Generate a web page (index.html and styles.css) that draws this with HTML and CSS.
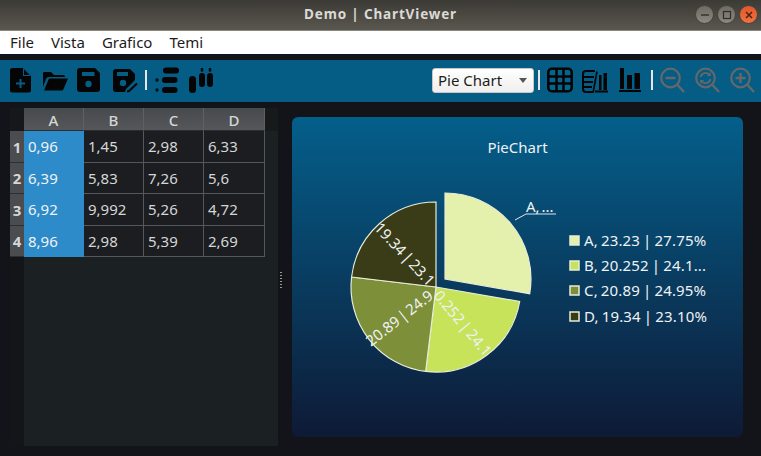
FILE: index.html
```html
<!DOCTYPE html>
<html lang="en">
<head>
<meta charset="UTF-8">
<title>Demo | ChartViewer</title>
<link rel="stylesheet" href="styles.css">
</head>
<body>

<header class="titlebar">
    <span class="title">Demo | ChartViewer</span>
    <div class="win-buttons">
        <span class="win-btn"><svg width="10" height="10" viewBox="0 0 10 10"><path d="M1 5h8" stroke="#2f2e2a" stroke-width="1.4"/></svg></span>
        <span class="win-btn"><svg width="10" height="10" viewBox="0 0 10 10"><rect x="1.5" y="1.5" width="7" height="7" fill="none" stroke="#2f2e2a" stroke-width="1.2"/></svg></span>
        <span class="win-btn win-close"><svg width="10" height="10" viewBox="0 0 10 10"><path d="M2 2l6 6M8 2l-6 6" stroke="#4a2413" stroke-width="1.5"/></svg></span>
    </div>
</header>

<nav class="menubar">
    <span class="menu-item">File</span>
    <span class="menu-item">Vista</span>
    <span class="menu-item">Grafico</span>
    <span class="menu-item">Temi</span>
</nav>

<div class="toolbar">
    <!-- new file -->
    <svg class="icon" width="21" height="26" viewBox="0 0 21 26"><path d="M3 1h10l8 8v14a2.500 2.500 0 0 1-2.500 2.500h-16A2.500 2.500 0 0 1 0 23V3.500A2.500 2.500 0 0 1 3 1z" fill="#050505"/><path d="M13 1v8h8z" fill="#055c84"/><path d="M14 2.500v5.500h5.500z" fill="#050505"/><path d="M10.500 12v9M6 16.500h9" stroke="#055c84" stroke-width="2"/></svg>
    <!-- open folder -->
    <svg class="icon icon-folder" width="26" height="26" viewBox="0 0 26 26"><path d="M2 5h7l3 3h9a2 2 0 0 1 2 2H7a3 3 0 0 0-3 2L1 20V6a1 1 0 0 1 1-1z" fill="#050505"/><path d="M7 11.500h19L21.500 22a2 2 0 0 1-2 1.500H2z" fill="#050505"/></svg>
    <!-- save -->
    <svg class="icon icon-save" width="23" height="26" viewBox="0 0 23 26"><path d="M3 1h15l5 5v16a3 3 0 0 1-3 3H3a3 3 0 0 1-3-3V4a3 3 0 0 1 3-3z" fill="#050505"/><rect x="5" y="5" width="12.500" height="4" fill="#055c84"/><circle cx="11.500" cy="17" r="3.200" fill="#055c84"/></svg>
    <!-- save as -->
    <svg class="icon icon-saveas" width="26" height="26" viewBox="0 0 26 26"><path d="M4 2h14l5 5v6l-9 9-1 3H4a3 3 0 0 1-3-3V5a3 3 0 0 1 3-3z" fill="#050505"/><rect x="5" y="5" width="11" height="4" fill="#055c84"/><circle cx="11" cy="16" r="3.200" fill="#055c84"/><path d="M15 24.500l2-.5 8-7.500" fill="none" stroke="#050505" stroke-width="2"/></svg>
    <span class="sep sep-a"></span>
    <!-- rows -->
    <svg class="icon icon-rows" width="24" height="26" viewBox="0 0 24 26"><rect x="8" y="0.500" width="16" height="6" rx="3" fill="#050505"/><rect x="7" y="10" width="15.500" height="6" rx="3" fill="#050505"/><rect x="7" y="20" width="15.500" height="6" rx="3" fill="#050505"/><path d="M0 13h4M2 11v4M0 23h4M2 21v4" stroke="#050505" stroke-width="1.200"/></svg>
    <!-- columns -->
    <svg class="icon icon-cols" width="26" height="26" viewBox="0 0 26 26"><rect x="0" y="9" width="7" height="17" rx="3.500" fill="#050505"/><rect x="10" y="6" width="6" height="14" rx="3" fill="#050505"/><rect x="18" y="6" width="6" height="14" rx="3" fill="#050505"/><path d="M13 1v3.500M21 1v3.500" stroke="#050505" stroke-width="2.400"/></svg>

    <div class="combo">
        <span>Pie Chart</span>
        <span class="combo-arrow"></span>
    </div>
    <span class="sep sep-b"></span>
    <!-- table -->
    <svg class="icon icon-table" width="26" height="26" viewBox="0 0 26 26"><rect x="1.300" y="1.800" width="23.400" height="22.400" rx="3.500" fill="#07648f" stroke="#050505" stroke-width="2.600"/><path d="M1 9.500h24M1 16.500h24M9.500 2v22M16.500 2v22" stroke="#050505" stroke-width="2.500"/></svg>
    <!-- table and bars -->
    <svg class="icon icon-mixed" width="26" height="26" viewBox="0 0 26 26"><path d="M13 4H4a3 3 0 0 0-3 3v15a3 3 0 0 0 3 3h7M1 10h11M1 15h10M1 20h9" fill="none" stroke="#050505" stroke-width="2"/><path d="M15 4.500L11 26" stroke="#050505" stroke-width="1.600"/><rect x="17" y="8" width="2.500" height="15" fill="#050505"/><rect x="21.500" y="6" width="3.500" height="17" fill="#050505"/><rect x="13" y="23.500" width="13" height="2" fill="#050505"/></svg>
    <!-- bars -->
    <svg class="icon icon-bars" width="23" height="26" viewBox="0 0 23 26"><rect x="1" y="1" width="4" height="21" fill="#050505"/><rect x="8" y="8" width="5" height="14" fill="#050505"/><rect x="15.500" y="6" width="5.500" height="16" fill="#050505"/><rect x="0" y="23" width="22" height="2" fill="#050505"/></svg>
    <span class="sep sep-c"></span>
    <!-- zoom out -->
    <svg class="icon icon-zoom" width="25" height="26" viewBox="0 0 25 26"><circle cx="10.500" cy="11" r="9.300" fill="none" stroke="#65686a" stroke-width="2.200"/><path d="M5.500 11h10M17.500 18l6.500 7" stroke="#65686a" stroke-width="2.400"/></svg>
    <!-- zoom reset -->
    <svg class="icon icon-zoom" width="25" height="26" viewBox="0 0 25 26"><circle cx="10.500" cy="11" r="9.300" fill="none" stroke="#65686a" stroke-width="2.200"/><path d="M17.500 18l6.500 7" stroke="#65686a" stroke-width="2.400"/><path d="M5.500 10a5.200 5.200 0 0 1 9-2.300M15.500 12a5.200 5.200 0 0 1-9 2.300" fill="none" stroke="#65686a" stroke-width="1.800"/><path d="M15.800 5v4h-4zM5.200 17v-4h4z" fill="#65686a"/></svg>
    <!-- zoom in -->
    <svg class="icon icon-zoom" width="25" height="26" viewBox="0 0 25 26"><circle cx="10.500" cy="11" r="9.300" fill="none" stroke="#65686a" stroke-width="2.200"/><path d="M5.500 11h10M10.500 6v10M17.500 18l6.500 7" stroke="#65686a" stroke-width="2.400"/></svg>
</div>

<main class="workspace">
    <section class="table-pane">
        <div class="grid">
            <div class="head corner"></div>
            <div class="head col-head">A</div>
            <div class="head col-head">B</div>
            <div class="head col-head">C</div>
            <div class="head col-head">D</div>
            <div class="head-filler"></div>

            <div class="row-head">1</div>
            <div class="cell selected">0,96</div>
            <div class="cell">1,45</div>
            <div class="cell">2,98</div>
            <div class="cell">6,33</div>
            <div></div>

            <div class="row-head">2</div>
            <div class="cell selected">6,39</div>
            <div class="cell">5,83</div>
            <div class="cell">7,26</div>
            <div class="cell">5,6</div>
            <div></div>

            <div class="row-head">3</div>
            <div class="cell selected">6,92</div>
            <div class="cell">9,992</div>
            <div class="cell">5,26</div>
            <div class="cell">4,72</div>
            <div></div>

            <div class="row-head">4</div>
            <div class="cell selected">8,96</div>
            <div class="cell">2,98</div>
            <div class="cell">5,39</div>
            <div class="cell">2,69</div>
            <div></div>
        </div>
    </section>

    <div class="splitter"><i></i><i></i><i></i><i></i><i></i><i></i></div>

    <section class="chart-panel">
        <svg class="chart" width="451" height="320" viewBox="292 117 451 320">
            <text class="chart-title" x="517.500" y="153">PieChart</text>

            <path class="slice" fill="#e3f1ac" d="M445 279V193A86 86 0 0 1 529.700 293.700Z"/>
            <path class="slice" fill="#c6e35a" d="M436 287L519.700 301.500A85 85 0 0 1 425.700 371.400Z"/>
            <path class="slice" fill="#7d8f38" d="M436 287L425.700 371.400A85 85 0 0 1 351.600 277Z"/>
            <path class="slice" fill="#393c16" d="M436 287L351.600 277A85 85 0 0 1 436 202Z"/>

            <text class="slice-label" transform="translate(373.500 228.500) rotate(47)">19.34 | 23.1</text>
            <text class="slice-label" transform="translate(433 296) rotate(50)">0.252 | 24.1</text>
            <text class="slice-label" transform="translate(371 347) rotate(-38)">20.89 | 24.9</text>

            <path class="callout" d="M515 220L526 214H556"/>
            <text class="slice-label" x="526" y="212">A, ...</text>

            <rect class="swatch" x="570" y="236" width="9" height="9" fill="#e3f1ac"/>
            <text class="legend-text" x="584" y="246">A, 23.23 | 27.75%</text>
            <rect class="swatch" x="570" y="261" width="9" height="9" fill="#c6e35a"/>
            <text class="legend-text" x="584" y="271">B, 20.252 | 24.1...</text>
            <rect class="swatch" x="570" y="286" width="9" height="9" fill="#7d8f38"/>
            <text class="legend-text" x="584" y="296">C, 20.89 | 24.95%</text>
            <rect class="swatch" x="570" y="312" width="9" height="9" fill="#393c16"/>
            <text class="legend-text" x="584" y="322">D, 19.34 | 23.10%</text>
        </svg>
    </section>
</main>

</body>
</html>
```

FILE: styles.css
```css
* {
    box-sizing: border-box;
}
body {
    margin: 0;
    width: 761px;
    height: 456px;
    overflow: hidden;
    display: flex;
    flex-direction: column;
    background-color: #13131a;
    font-family: "Noto Sans", "Open Sans", sans-serif;
}

/* window title */
.titlebar {
    height: 31px;
    flex: none;
    position: relative;
    padding-bottom: 3px;
    display: flex;
    align-items: center;
    justify-content: center;
    background: linear-gradient(#3c3a35, #5a574f);
    border-bottom: 1px solid #8a8780;
}
.title {
    color: #dcdad5;
    font-size: 13.5px;
    font-weight: bold;
    letter-spacing: 0.85px;
}
.win-buttons {
    position: absolute;
    top: 5px;
    right: 3px;
    display: flex;
    gap: 3px;
}
.win-btn {
    width: 19px;
    height: 19px;
    border-radius: 50%;
    display: flex;
    align-items: center;
    justify-content: center;
    background: linear-gradient(#6e6b64, #8b8880);
    border: 1px solid #47453f;
}
.win-close {
    background: linear-gradient(#e2572a, #f0723f);
}

/* menu */
.menubar {
    height: 23px;
    flex: none;
    display: flex;
    align-items: center;
    padding: 0 0 2px 10px;
    gap: 17px;
    background-color: #ffffff;
    color: #1c1c1c;
    font-size: 15px;
}

/* toolbar */
.toolbar {
    height: 42px;
    flex: none;
    margin-top: 6px;
    padding: 0 6px 2px 10px;
    display: flex;
    align-items: center;
    background-color: #055c84;
}
.icon {
    flex: none;
}
.icon-folder {
    margin-left: 11px;
}
.icon-save {
    margin-left: 9px;
}
.icon-saveas {
    margin-left: 12px;
}
.icon-rows {
    margin-left: 8px;
}
.icon-cols {
    margin-left: 10px;
}
.icon-table {
    margin-left: 7px;
}
.icon-mixed {
    margin-left: 9px;
}
.icon-bars {
    margin-left: 11px;
}
.icon-zoom {
    margin-left: 10px;
}
.sep {
    flex: none;
    width: 2px;
    height: 20px;
    background-color: #e6e6e6;
}
.sep-a {
    margin-left: 7px;
}
.sep-b {
    margin-left: 4px;
}
.sep-c {
    margin-left: 9px;
}
.sep-c + .icon-zoom {
    margin-left: 7px;
}
.combo {
    margin-left: auto;
    width: 102px;
    height: 25px;
    padding: 0 6px 0 5px;
    display: flex;
    align-items: center;
    justify-content: space-between;
    background: linear-gradient(#ffffff, #f0efed);
    border: 1px solid #c9c7c2;
    border-radius: 3px;
    color: #1d1d1d;
    font-size: 15px;
}
.combo-arrow {
    width: 0;
    height: 0;
    border-left: 4px solid transparent;
    border-right: 4px solid transparent;
    border-top: 5px solid #555555;
}

/* main area */
.workspace {
    flex: 1;
    min-height: 0;
    display: flex;
    padding: 6px 18px 10px 10px;
}
.table-pane {
    width: 268px;
    flex: none;
    background: linear-gradient(90deg, #141518 14px, #1b2023 14px);
}
.grid {
    display: grid;
    grid-template-columns: 14px 60px 60px 60px 61px 13px;
    grid-template-rows: 23px 32px 31px 32px 31px;
    font-size: 15px;
    color: #d6d6d6;
}
.head {
    display: flex;
    align-items: center;
    justify-content: center;
    padding-top: 2px;
    background: linear-gradient(#474a4d, #55575a);
    border-right: 1px solid #5e6163;
    border-bottom: 1px solid #2b2d2f;
    font-weight: 500;
}
.corner {
    background: #16171a;
    border: none;
}
.head-filler {
    background-color: #171a1b;
}
.row-head {
    display: flex;
    align-items: center;
    justify-content: center;
    background-color: #4a4c4f;
    border-bottom: 1px solid #2d2f31;
    font-weight: bold;
}
.cell {
    display: flex;
    align-items: center;
    padding: 0 0 1px 4px;
    background-color: #1b1d20;
    border-right: 1px solid #55585a;
    border-bottom: 1px solid #55585a;
}
.selected {
    background-color: #2d8bc9;
    color: #f2f2f2;
    border-color: #2d8bc9;
}
.splitter {
    width: 6px;
    margin: 6px 8px 0 0;
    flex: none;
    display: flex;
    flex-direction: column;
    align-items: center;
    justify-content: center;
    gap: 2px;
}
.splitter i {
    width: 2px;
    height: 1px;
    background-color: #9a9a9a;
}
.chart-panel {
    flex: 1;
    margin: 9px 0;
    border-radius: 6px;
    overflow: hidden;
    background: linear-gradient(#045f8b, #0e1a36);
}
.chart {
    display: block;
}
.chart text {
    font-family: "Noto Sans", "Open Sans", sans-serif;
    fill: #eef2f4;
}
.chart-title {
    font-size: 15px;
    text-anchor: middle;
}
.slice {
    stroke: #e8ecd8;
    stroke-width: 1.2;
}
.slice-label {
    font-size: 15px;
    word-spacing: -2px;
}
.legend-text {
    font-size: 15px;
    letter-spacing: 0.15px;
    word-spacing: -1px;
}
.callout {
    fill: none;
    stroke: #dfe6ea;
    stroke-width: 1;
}
.swatch {
    stroke: #e8ecd8;
    stroke-width: 1.5;
}
```
